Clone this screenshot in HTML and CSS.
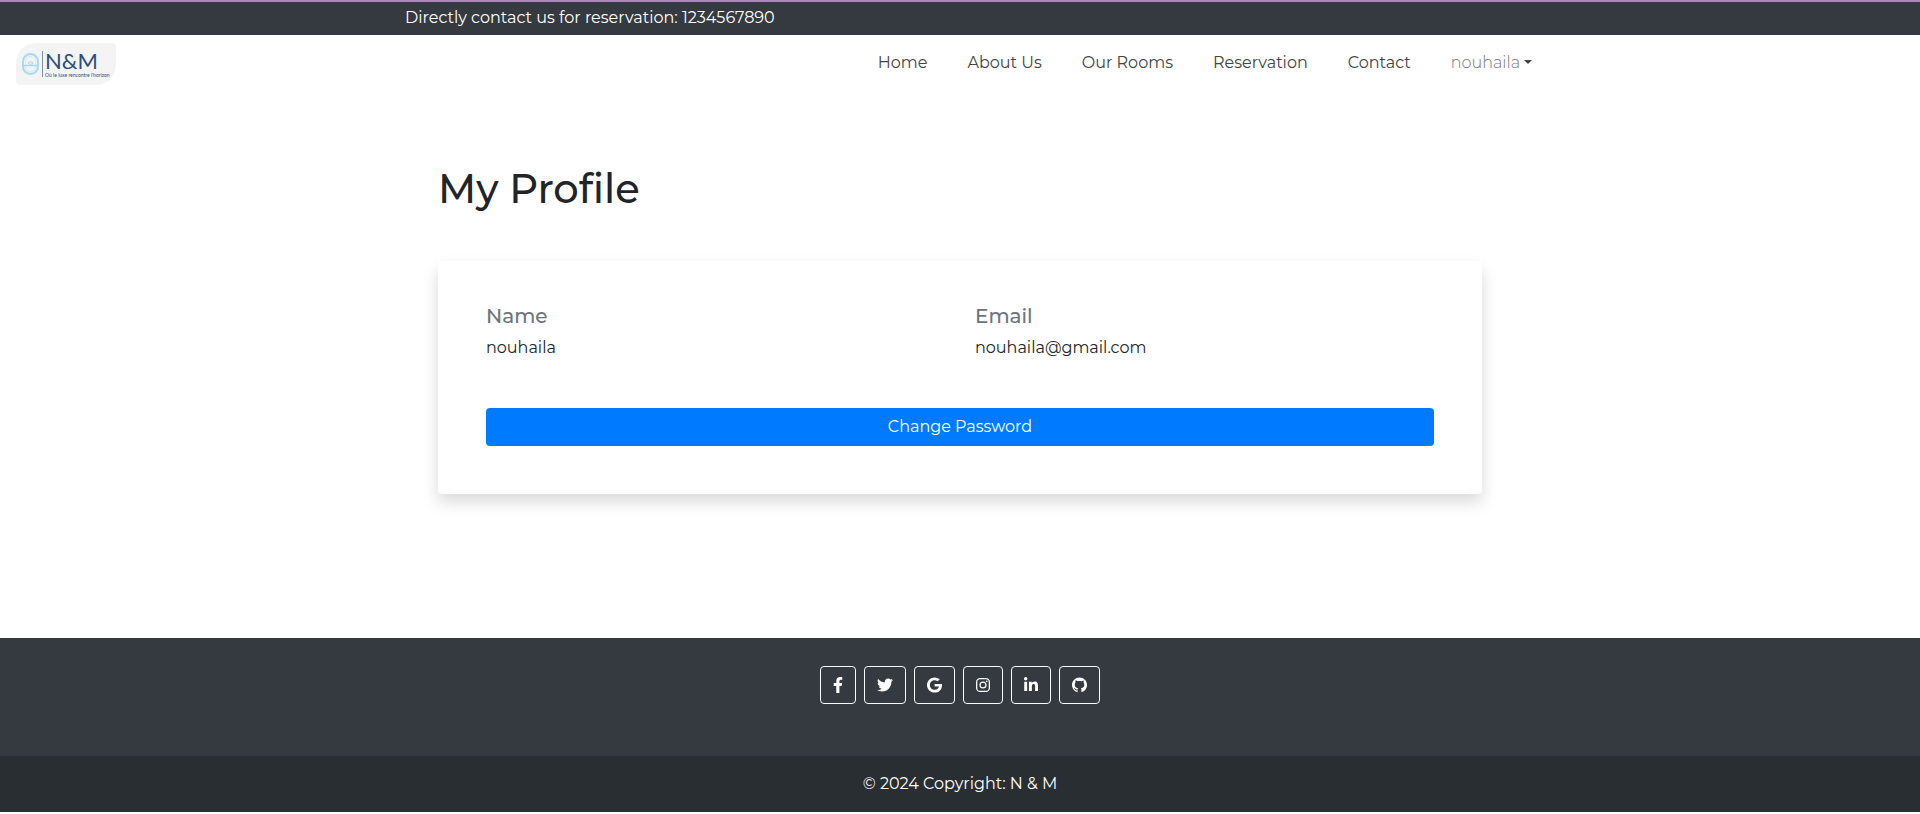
FILE: index.html
```html
<!DOCTYPE html>
<html lang="en">
<head>
<meta charset="utf-8">
<title>My Profile</title>
<meta name="viewport" content="width=device-width, initial-scale=1">
<link rel="stylesheet" href="styles.css">
</head>
<body>
<div class="topbar"><div class="topbar-inner">Directly contact us for reservation: 1234567890</div></div>
<header class="navbar">
  <a class="brand" href="#" aria-label="N&amp;M">
    <svg class="brand-mark" viewBox="0 0 22 28" aria-hidden="true">
      <g fill="none" stroke="#a5dbf0">
        <rect x="2" y="4" width="15" height="20" rx="7.500" stroke-width="2"/>
        <rect x="4.500" y="6.500" width="10" height="15" rx="5" stroke-width="1" opacity=".4"/>
        <path d="M3 15.500H16" stroke-width="1.500"/>
        <ellipse cx="9.500" cy="13" rx="2.500" ry="1.200" stroke-width="1"/>
      </g>
      <path d="M21.500 1V27" stroke="#7b93ad" stroke-width="1"/>
    </svg>
    <span class="brand-text">
      <span class="brand-name">N&amp;M</span>
      <span class="brand-tag">Où le luxe rencontre l'horizon</span>
    </span>
  </a>
  <nav class="menu" aria-label="Main">
    <a href="#">Home</a>
    <a href="#">About Us</a>
    <a href="#">Our Rooms</a>
    <a href="#">Reservation</a>
    <a href="#">Contact</a>
    <a class="user" href="#">nouhaila</a>
  </nav>
</header>
<main class="profile">
  <h1>My Profile</h1>
  <section class="card">
    <dl class="details">
      <div><dt>Name</dt><dd>nouhaila</dd></div>
      <div><dt>Email</dt><dd>nouhaila@gmail.com</dd></div>
    </dl>
    <button class="primary" type="button">Change Password</button>
  </section>
</main>
<footer class="footer">
  <div class="social">
    <a href="#" aria-label="Facebook"><svg class="w10" viewBox="0 0 320 512"><path d="M279.140 288l14.220-92.660h-88.910v-60.130c0-25.350 12.420-50.060 52.240-50.060h40.420V6.260S260.430 0 225.360 0c-73.220 0-121.080 44.380-121.080 124.720v70.620H22.890V288h81.390v224h100.170V288z"/></svg></a>
    <a href="#" aria-label="Twitter"><svg class="w16" viewBox="0 0 512 512"><path d="M459.370 151.716c.325 4.548.325 9.097.325 13.645 0 138.720-105.583 298.558-298.558 298.558-59.452 0-114.680-17.219-161.137-47.106 8.447.974 16.568 1.299 25.340 1.299 49.055 0 94.213-16.568 130.274-44.832-46.132-.975-84.792-31.188-98.112-72.772 6.498.974 12.995 1.624 19.818 1.624 9.421 0 18.843-1.300 27.614-3.573-48.081-9.747-84.143-51.980-84.143-102.985v-1.299c13.969 7.797 30.214 12.670 47.431 13.319-28.264-18.843-46.781-51.005-46.781-87.391 0-19.492 5.197-37.360 14.294-52.954 51.655 63.675 129.300 105.258 216.365 109.807-1.624-7.797-2.599-15.918-2.599-24.040 0-57.828 46.782-104.934 104.934-104.934 30.213 0 57.502 12.670 76.670 33.137 23.715-4.548 46.456-13.320 66.599-25.340-7.798 24.366-24.366 44.833-46.132 57.827 21.117-2.273 41.584-8.122 60.426-16.243-14.292 20.791-32.161 39.308-52.628 54.253z"/></svg></a>
    <a href="#" aria-label="Google"><svg class="w15" viewBox="0 0 488 512"><path d="M488 261.800C488 403.300 391.100 504 248 504 110.800 504 0 393.200 0 256S110.800 8 248 8c66.800 0 123 24.500 166.300 64.900l-67.500 64.900C258.500 52.600 94.300 116.600 94.300 256c0 86.500 69.100 156.600 153.700 156.600 98.200 0 135-70.400 140.800-106.900H248v-85.300h236.100c2.300 12.700 3.900 24.900 3.900 41.400z"/></svg></a>
    <a href="#" aria-label="Instagram"><svg class="w14" viewBox="0 0 448 512"><path fill-rule="evenodd" d="M132 32H316A132 132 0 0 1 448 164V348A132 132 0 0 1 316 480H132A132 132 0 0 1 0 348V164A132 132 0 0 1 132 32ZM132 73A91 91 0 0 0 41 164V348A91 91 0 0 0 132 439H316A91 91 0 0 0 407 348V164A91 91 0 0 0 316 73ZM224 141A115 115 0 1 1 224 371A115 115 0 1 1 224 141ZM224 181A75 75 0 1 0 224 331A75 75 0 1 0 224 181ZM343.500 109.500A27 27 0 1 1 343.500 163.500A27 27 0 1 1 343.500 109.500Z"/></svg></a>
    <a href="#" aria-label="LinkedIn"><svg class="w14" viewBox="0 0 448 512"><path d="M100.280 448H7.400V148.900h92.880zM53.790 108.100C24.090 108.100 0 83.500 0 53.800a53.790 53.790 0 0 1 107.580 0c0 29.700-24.100 54.300-53.790 54.300zM447.900 448h-92.680V302.400c0-34.700-.7-79.200-48.290-79.200-48.290 0-55.690 37.700-55.690 76.700V448h-92.780V148.900h89.080v40.800h1.300c12.400-23.500 42.690-48.300 87.880-48.300 94 0 111.280 61.900 111.280 142.300V448z"/></svg></a>
    <a href="#" aria-label="GitHub"><svg class="w15" viewBox="0 0 16 16"><path d="M8 0C3.580 0 0 3.580 0 8c0 3.540 2.290 6.530 5.470 7.590.4.070.55-.17.55-.38 0-.19-.01-.82-.01-1.490-2.010.37-2.530-.49-2.690-.94-.09-.23-.48-.94-.82-1.130-.28-.15-.68-.52-.01-.53.63-.01 1.080.58 1.230.82.720 1.210 1.870.87 2.330.66.070-.52.280-.87.510-1.070-1.780-.2-3.640-.89-3.640-3.950 0-.87.310-1.590.82-2.150-.08-.2-.36-1.020.08-2.120 0 0 .67-.21 2.200.82.640-.18 1.320-.27 2-.27s1.360.09 2 .27c1.530-1.040 2.200-.82 2.200-.82.440 1.100.16 1.920.08 2.120.51.560.82 1.270.82 2.150 0 3.070-1.870 3.750-3.650 3.950.29.250.54.730.54 1.480 0 1.070-.01 1.930-.01 2.200 0 .21.150.46.550.38A8.010 8.010 0 0 0 16 8c0-4.420-3.580-8-8-8z"/></svg></a>
  </div>
  <div class="copyright">© 2024 Copyright: N &amp; M</div>
</footer>
</body>
</html>
```
FILE: styles.css
```css
* { box-sizing: border-box; }
body {
  margin: 0;
  background: #fff;
  color: #212529;
  font: 400 16px/24px Montserrat, Inter, sans-serif;
}
a { color: inherit; text-decoration: none; }
.topbar {
  padding: 4px 0 5px;
  border-top: 2px solid #ae88b9;
  background: #343a40;
  color: #fff;
}
.topbar-inner { max-width: 1110px; margin: 0 auto; }
.navbar {
  display: flex;
  justify-content: space-between;
  align-items: flex-start;
  padding: 8px 16px;
}
.brand {
  display: flex;
  align-items: center;
  gap: 2px;
  width: 100px;
  height: 42px;
  padding-left: 5px;
  border-radius: 20px 4px 20px 4px;
  background: #f4f4f4;
  color: #2b507c;
}
.brand-mark { width: 22px; height: 28px; flex: none; }
.brand-text { display: flex; flex-direction: column; white-space: nowrap; }
.brand-name { font: 22px/22px Lato, sans-serif; }
.brand-tag { font: 5px/6px Lato, sans-serif; }
.menu { display: flex; gap: 40px; margin-right: 372px; padding-top: 8px; color: #444; }
.user { color: #777; font-weight: 300; }
.user::after {
  content: "";
  display: inline-block;
  margin-left: 4px;
  vertical-align: 4px;
  border: 4px solid transparent;
  border-top-color: #444;
  border-bottom: 0;
}
.profile { max-width: 1044px; margin: 0 auto; padding: 72px 0 144px; }
h1 { margin: 0; font-size: 40px; line-height: 48px; font-weight: 500; }
.card {
  margin-top: 48px;
  padding: 43px 48px 48px;
  border-radius: 4px;
  background: #fff;
  box-shadow: 0 8px 16px rgba(0, 0, 0, .15);
}
.details { display: grid; grid-template-columns: 1fr 1fr; gap: 30px; margin: 0 0 48px; }
dt { margin-bottom: 8px; font-size: 20px; line-height: 24px; font-weight: 500; color: #6c757d; }
dd { margin: 0; }
.primary {
  width: 100%;
  height: 38px;
  border: 0;
  border-radius: 4px;
  background: #007bff;
  color: #fff;
  font: inherit;
}
.footer { background: #343a40; color: #fff; }
.social { display: flex; justify-content: center; gap: 8px; padding: 28px 0 52px; }
.social a {
  display: flex;
  align-items: center;
  height: 38px;
  padding: 0 12px;
  border: 1px solid #f8f9fa;
  border-radius: 4px;
}
.social svg { height: 16px; fill: #fff; }
.w10 { width: 10px; }
.w14 { width: 14px; }
.w15 { width: 15px; }
.w16 { width: 16px; }
.copyright { padding: 16px; background: rgba(0, 0, 0, .2); text-align: center; }
```
